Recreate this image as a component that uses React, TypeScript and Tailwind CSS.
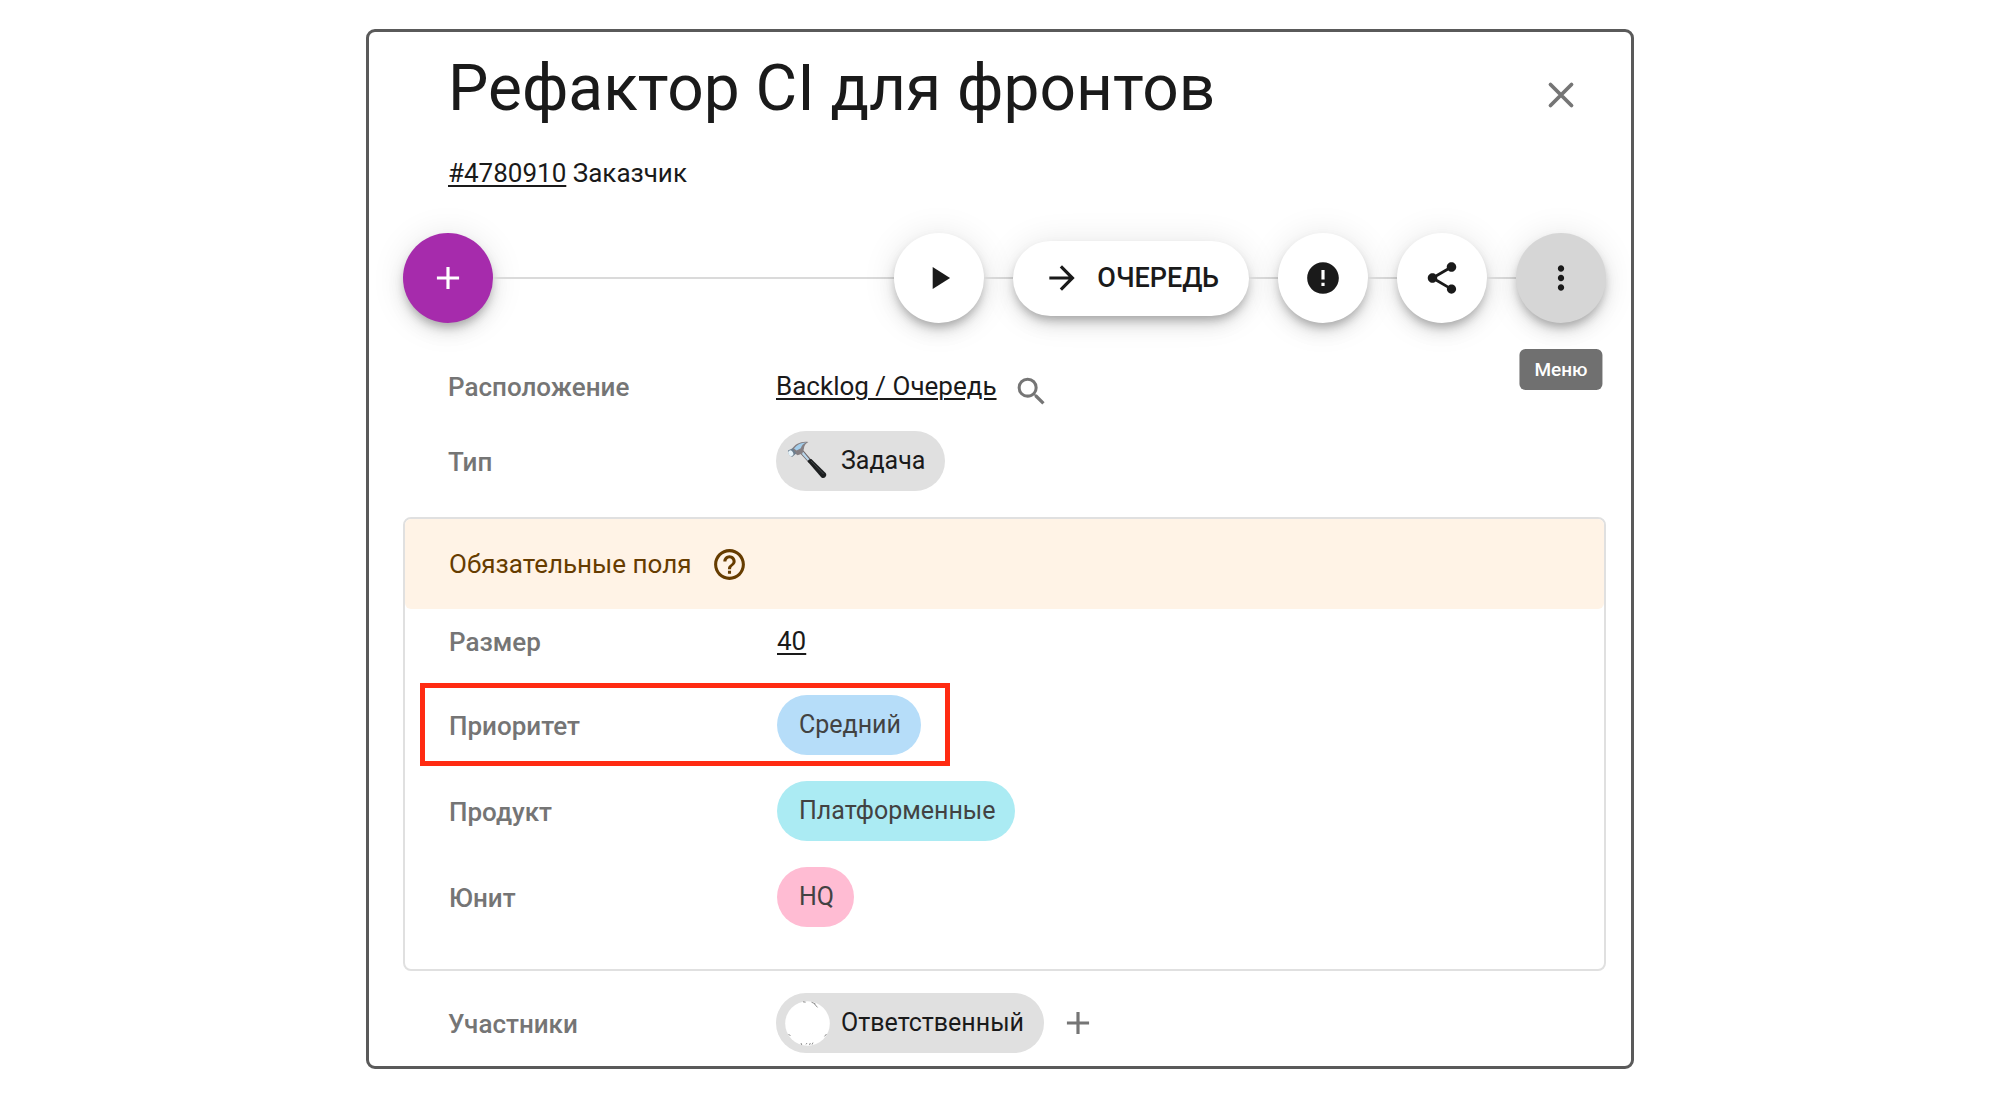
import React, { useState } from "react";
import clsx from "clsx";
import {
  MdAdd,
  MdArrowForward,
  MdError,
  MdHelpOutline,
  MdMoreVert,
  MdPlayArrow,
  MdSearch,
  MdShare,
} from "react-icons/md";

const fabShadow =
  "shadow-[0_6px_10px_-2px_rgba(0,0,0,0.26),0_10px_18px_0_rgba(0,0,0,0.08),0_2px_34px_0_rgba(0,0,0,0.10)]";

const Fab = ({
  label,
  className,
  children,
}: {
  label: string;
  className?: string;
  children: React.ReactNode;
}) => (
  <button
    type="button"
    aria-label={label}
    className={clsx(
      "flex size-[90px] shrink-0 items-center justify-center rounded-full text-[38px]",
      fabShadow,
      className
    )}
  >
    {children}
  </button>
);

// piece of the thin line that joins the toolbar buttons
const Line = ({ grow }: { grow?: boolean }) => (
  <div
    className={clsx(
      "h-0.5 bg-[#dadada]",
      grow ? "flex-1" : "w-[29px] shrink-0"
    )}
  />
);

const Field = ({
  label,
  highlighted,
  children,
}: {
  label: string;
  highlighted?: boolean;
  children: React.ReactNode;
}) => (
  <div className="relative flex w-fit items-center">
    <div className="w-[328px] shrink-0 pt-0.5 text-[26px] leading-10 font-medium text-[#757575]">
      {label}
    </div>
    {children}
    {highlighted && (
      <div className="pointer-events-none absolute -inset-x-[29px] -top-3 -bottom-[11px] border-5 border-[#ff2b12]" />
    )}
  </div>
);

const Chip = ({
  className,
  icon,
  children,
}: {
  className: string;
  icon?: React.ReactNode;
  children: React.ReactNode;
}) => (
  <button
    type="button"
    className={clsx(
      "flex h-[60px] items-center rounded-full pr-5 text-[25px] leading-10",
      icon ? "gap-[11px] pl-[9px]" : "pl-[22px]",
      className
    )}
  >
    {icon}
    {children}
  </button>
);

const CloseIcon = () => (
  <svg className="size-[44px]" viewBox="0 0 44 44" aria-hidden="true">
    <path
      d="M11.500 11.500l21 21M32.500 11.500l-21 21"
      stroke="currentColor"
      strokeWidth="3.800"
      strokeLinecap="round"
      fill="none"
    />
  </svg>
);

const HammerIcon = () => (
  <svg className="size-[45px]" viewBox="0 0 45 45" aria-hidden="true">
    <path d="M13.5 12.5l3.6-2.6L27 21.6l-2.8 2.6z" fill="#6f6466" />
    <path d="M14.6 12.6l2.2-1.6 8.6 10.4-1.6 1.4z" fill="#b9d6ea" />
    <path
      d="M22.6 22.6c.4-1.6 2.4-3 4-2.4L40.6 34c1.6 1.8.2 4.8-2.4 5-1 0-1.6-.4-2.2-1z"
      fill="#1d1f20"
    />
    <path d="M26 22l12.6 13" stroke="#43484a" strokeWidth="1" fill="none" />
    <path
      d="M6.600 10.400C10 4.600 16.600 1.800 23.400 2.900c-2.800 1.400-4.400 3.700-4.500 6.900l-1.500 4.600-4.800 1.900-3.600-2.600z"
      fill="#857f83"
    />
    <path
      d="M9 9.400c3-4 7.600-6.200 12.400-6-3.200 1.200-4.800 3-5.600 5.800l-4.200 2.200z"
      fill="#a3cdea"
    />
    <path
      d="M3 11.600l4.600-2.400 3.600 5.200-3.800 3.400c-2.800-.4-4.800-3.600-4.400-6.200z"
      fill="#6d7f8f"
    />
    <ellipse
      cx="5.8"
      cy="14.3"
      rx="2.3"
      ry="3"
      transform="rotate(-32 5.8 14.3)"
      fill="#e6f3fa"
    />
  </svg>
);

const Avatar = () => (
  <svg className="size-[45px]" viewBox="0 0 45 45" aria-hidden="true">
    <circle cx="22.5" cy="22.5" r="22.3" fill="#fff" />
    <g stroke="#8f8f8f" strokeWidth="1" fill="none">
      <path d="M26.5 1.2l4 1.8M29.5 3l3 3.4M18 .8l2.6.4" />
      <path d="M3.5 33l2 2M41.5 33l-2 2.4M16 42l.8 2M21 43.4l1-1.4M24.5 44l.8-2M28 41.6l-1 2" />
    </g>
  </svg>
);

const link =
  "text-[26px] leading-10 text-[#1a1a1a] underline decoration-2 underline-offset-3";

export default function App() {
  const [open, setOpen] = useState(true);

  if (!open) return null;

  return (
    <main className="min-h-screen bg-white px-6 pt-[29px] pb-[30px] font-[Roboto,sans-serif] text-[#1a1a1a]">
      <section className="mx-auto max-w-[1268px] rounded-[9px] border-3 border-[#5a5a5a] pt-[17px] pr-[25px] pb-[13px] pl-[34px]">
        <header className="flex items-start justify-between pr-[23px] pl-[45px]">
          <div>
            <h1 className="text-[64px] leading-[80px]">
              Рефактор CI для фронтов
            </h1>
            <p className="mt-6 text-[26px] leading-10">
              <a
                href="#4780910"
                className="underline decoration-2 underline-offset-3"
              >
                #4780910
              </a>{" "}
              Заказчик
            </p>
          </div>
          <button
            type="button"
            aria-label="Закрыть"
            onClick={() => setOpen(false)}
            className="mt-6 text-[#757575]"
          >
            <CloseIcon />
          </button>
        </header>

        <div className="mt-10 flex items-center">
          <Fab label="Добавить" className="bg-[#a62bac] text-white">
            <MdAdd />
          </Fab>
          <Line grow />
          <Fab label="Запустить" className="bg-white">
            <MdPlayArrow />
          </Fab>
          <Line />
          <button
            type="button"
            className={clsx(
              "flex h-[75px] shrink-0 items-center gap-4 rounded-full bg-white px-[30px] text-[27px] font-medium",
              fabShadow
            )}
          >
            <MdArrowForward className="text-[38px]" />
            ОЧЕРЕДЬ
          </button>
          <Line />
          <Fab label="Блокировка" className="bg-white">
            <MdError />
          </Fab>
          <Line />
          <Fab label="Поделиться" className="bg-white">
            <MdShare />
          </Fab>
          <Line />
          <div className="relative">
            <Fab label="Меню" className="bg-[#d6d6d6]">
              <MdMoreVert />
            </Fab>
            <div
              role="tooltip"
              className="absolute top-full left-1/2 mt-[26px] -translate-x-1/2 rounded-md bg-[#707070] px-[15px] text-[19px] leading-[41px] font-medium text-white"
            >
              Меню
            </div>
          </div>
        </div>

        <div className="mt-[35px] flex flex-col gap-[17px] pl-[45px]">
          <Field label="Расположение">
            <div className="flex h-14 items-center gap-4">
              <a href="#location" className={link}>
                Backlog / Очередь
              </a>
              <button
                type="button"
                aria-label="Найти"
                className="pt-2.5 text-[37px] text-[#757575]"
              >
                <MdSearch />
              </button>
            </div>
          </Field>
          <Field label="Тип">
            <Chip className="bg-[#e0e0e0]" icon={<HammerIcon />}>
              Задача
            </Chip>
          </Field>
        </div>

        <section className="mt-[26px] rounded-lg border-2 border-[#e0e0e0] pb-[42px]">
          <h2 className="flex h-[90px] items-center gap-5 rounded-md bg-[#fff3e6] pl-11 text-[26px] text-[#663c00]">
            Обязательные поля
            <MdHelpOutline className="text-[37px]" />
          </h2>
          <div className="flex flex-col gap-[26px] pt-1 pl-11">
            <Field label="Размер">
              <div className="flex h-14 items-center">
                <a href="#size" className={link}>
                  40
                </a>
              </div>
            </Field>
            <Field label="Приоритет" highlighted>
              <Chip className="bg-[#b6ddf9] text-[#424242]">Средний</Chip>
            </Field>
            <Field label="Продукт">
              <Chip className="bg-[#abebf3] text-[#424242]">Платформенные</Chip>
            </Field>
            <Field label="Юнит">
              <Chip className="bg-[#ffbcd3] text-[#424242]">HQ</Chip>
            </Field>
          </div>
        </section>

        <div className="mt-[22px] pl-[45px]">
          <Field label="Участники">
            <Chip className="bg-[#e0e0e0]" icon={<Avatar />}>
              Ответственный
            </Chip>
            <button
              type="button"
              aria-label="Добавить участника"
              className="ml-[15px] text-[38px] text-[#757575]"
            >
              <MdAdd />
            </button>
          </Field>
        </div>
      </section>
    </main>
  );
}
